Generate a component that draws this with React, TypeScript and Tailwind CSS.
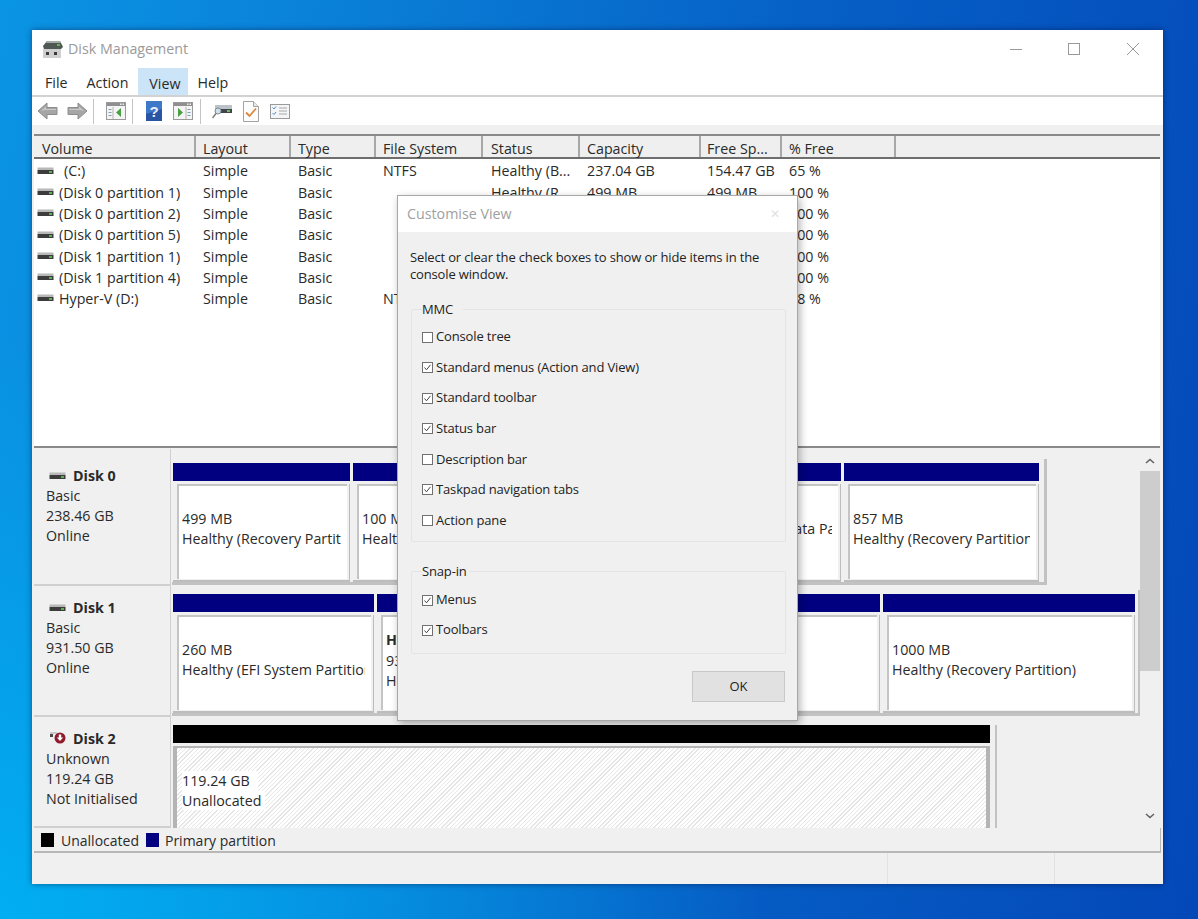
const widths = [
  "w-[162px] pl-2",
  "w-[95px] pl-[7px]",
  "w-[85px] pl-[7px]",
  "w-[107px] pl-[7px]",
  "w-[97px] pl-2",
  "w-[121px] pl-[7px]",
  "w-[81px] pl-[6px]",
  "w-[114px] pl-[7px]",
];

const headers = ["Volume", "Layout", "Type", "File System", "Status", "Capacity", "Free Sp...", "% Free"];

const rows = [
  ["(C:)", "Simple", "Basic", "NTFS", "Healthy (B...", "237.04 GB", "154.47 GB", "65 %"],
  ["(Disk 0 partition 1)", "Simple", "Basic", "", "Healthy (R...", "499 MB", "499 MB", "100 %"],
  ["(Disk 0 partition 2)", "Simple", "Basic", "", "Healthy (E...", "100 MB", "100 MB", "100 %"],
  ["(Disk 0 partition 5)", "Simple", "Basic", "", "Healthy (R...", "857 MB", "857 MB", "100 %"],
  ["(Disk 1 partition 1)", "Simple", "Basic", "", "Healthy (E...", "260 MB", "260 MB", "100 %"],
  ["(Disk 1 partition 4)", "Simple", "Basic", "", "Healthy (R...", "1000 MB", "1000 MB", "100 %"],
  ["Hyper-V (D:)", "Simple", "Basic", "NTFS", "Healthy (B...", "930.26 GB", "446.52 GB", "48 %"],
];

function DriveIcon() {
  return (
    <svg width="17" height="9" viewBox="0 0 17 9" className="shrink-0">
      <rect x="0.5" y="0.5" width="16" height="2.5" fill="#b8b8b8" />
      <rect x="0.5" y="3" width="16" height="4" fill="#3c3c3c" />
      <rect x="12" y="4" width="3" height="2" fill="#59b34c" />
    </svg>
  );
}

function BadDiskIcon() {
  return (
    <svg width="18" height="16" viewBox="0 0 18 16" className="shrink-0">
      <rect x="1" y="1" width="7" height="2" fill="#c9c9c9" />
      <rect x="1" y="3" width="3" height="3" fill="#4a4a4a" />
      <circle cx="11" cy="7" r="5.5" fill="#8e1b2c" />
      <path d="M9.8 3.5h2.4v3h2L11 10 7.8 6.500h2z" fill="#fff" />
    </svg>
  );
}

function ArrowIcon({ flip }: { flip?: boolean }) {
  return (
    <svg width="21" height="20" viewBox="0 0 21 20" className={flip ? "-scale-x-100" : ""}>
      <path d="M1 10 10 2v4.500h10v7H10V18z" fill="#a6a6a6" stroke="#8c8c8c" strokeWidth="1" />
      <path d="M4 10 9 5.500V8h10v1H8z" fill="#c8c8c8" />
    </svg>
  );
}

function PaneIcon({ arrowLeft }: { arrowLeft?: boolean }) {
  return (
    <svg width="20" height="18" viewBox="0 0 20 18">
      <rect x="0.5" y="0.5" width="19" height="17" fill="#f4f4f4" stroke="#9a9a9a" />
      <rect x="1" y="1" width="18" height="3" fill="#8f8f8f" />
      <rect x="14" y="1.500" width="1.500" height="1.500" fill="#eee" />
      <rect x="16.500" y="1.500" width="1.500" height="1.500" fill="#eee" />
      {arrowLeft ? (
        <g>
          <path d="M7 5v12" stroke="#b4b4b4" />
          <path d="M2.500 7.500h3M2.500 10.500h3M2.500 13.500h3" stroke="#7f9fb5" strokeWidth="1.200" />
          <path d="M15 6v9l-5-4.500z" fill="#4a9f45" />
        </g>
      ) : (
        <g>
          <path d="M13 5v12" stroke="#b4b4b4" />
          <path d="M14.500 7.500h3M14.500 10.500h3M14.500 13.500h3" stroke="#7f9fb5" strokeWidth="1.200" />
          <path d="M5 6v9l5-4.500z" fill="#4a9f45" />
        </g>
      )}
    </svg>
  );
}

function HelpIcon() {
  return (
    <svg width="16" height="20" viewBox="0 0 16 20">
      <rect width="16" height="20" fill="#2a55a5" />
      <path d="M0 0h16v8L0 13z" fill="#3f78c8" />
      <text x="8" y="15.500" textAnchor="middle" fontSize="15" fontWeight="700" fontFamily="Liberation Sans, sans-serif" fill="#e8eef8">?</text>
    </svg>
  );
}

function FindDiskIcon() {
  return (
    <svg width="21" height="20" viewBox="0 0 21 20">
      <rect x="3" y="4" width="17" height="4" fill="#b9c3c9" />
      <rect x="3" y="8" width="17" height="4" fill="#3f4548" />
      <rect x="15" y="9" width="3" height="2" fill="#6cbf5a" />
      <circle cx="6" cy="10" r="3" fill="#cfe0ea" stroke="#7d8a90" />
      <path d="M4 12.500 0.500 17" stroke="#7d7d7d" strokeWidth="1.500" />
    </svg>
  );
}

function CheckDocIcon() {
  return (
    <svg width="16" height="21" viewBox="0 0 16 21">
      <path d="M0.500 0.500h10l5 5v15H0.500z" fill="#fdfdfd" stroke="#a3a3a3" />
      <path d="M10.500 0.500v5h5" fill="#e9e9e9" stroke="#a3a3a3" />
      <path d="M3 11.500 6.500 15 13 7.500" fill="none" stroke="#d9883d" strokeWidth="1.800" />
    </svg>
  );
}

function ListIcon() {
  return (
    <svg width="20" height="15" viewBox="0 0 20 15">
      <rect x="0.500" y="0.500" width="19" height="14" fill="#f3f5f7" stroke="#9a9a9a" />
      <path d="M2.500 3.500 4 5l2-2.500M2.500 9 4 10.500l2-2.500" fill="none" stroke="#4f8fc9" strokeWidth="1" />
      <path d="M9 4h8M9 7h8M9 10h8" stroke="#a8a8a8" />
    </svg>
  );
}

function TitleIcon() {
  return (
    <svg width="21" height="19" viewBox="0 0 21 19">
      <path d="M5 1h13l3 6-2 2H2L1 6z" fill="#4f5853" />
      <path d="M5 1h13l1 2H4z" fill="#a3aca7" />
      <rect x="15" y="4" width="3" height="2" fill="#62b552" />
      <rect x="1" y="9" width="18" height="9" fill="#cfcfcf" />
      <rect x="4" y="12" width="3" height="3" fill="#3a3a3a" />
      <rect x="12" y="12" width="3" height="3" fill="#3a3a3a" />
    </svg>
  );
}

function Sep() {
  return <div className="h-[25px] w-px bg-[#c4c4c4]" />;
}

function Partition({
  width,
  bar = "bg-[#000080]",
  size,
  status,
  boldName,
}: {
  width: string;
  bar?: string;
  size?: string;
  status: string;
  boldName?: string;
}) {
  return (
    <div className={`${width} flex h-full shrink-0 flex-col border-r-[3px] border-[#f0f0f0]`}>
      <div className={`h-[18px] ${bar}`} />
      <div className="mt-[3px] flex-1 border-r border-b-2 border-[#bdbdbd] pr-[2px] pb-[1px] pl-1">
        <div className="h-full border-t-2 border-l-2 border-[#c4c4c4] bg-white pr-[6px] pl-[3px]">
          <div className="flex h-full flex-col justify-center overflow-hidden pb-[7px] whitespace-nowrap">
            {boldName && <div className="font-bold">{boldName}</div>}
            {size && <div className="leading-[20px]">{size}</div>}
            <div className="leading-[20px]">{status}</div>
          </div>
        </div>
      </div>
    </div>
  );
}

function DiskLabel({
  name,
  lines,
  height,
  top,
  bad,
}: {
  name: string;
  lines: string[];
  height: string;
  top: string;
  bad?: boolean;
}) {
  return (
    <div className={`${height} ${top} w-[137px] shrink-0 border-r border-b-2 border-[#d0d0d0] bg-[#f0f0f0] pl-[12px]`}>
      <div className="flex h-[20px] items-center gap-[7px] pl-[3px] font-bold">
        {bad ? <BadDiskIcon /> : <DriveIcon />}
        <span className={bad ? "-ml-[1px]" : ""}>{name}</span>
      </div>
      {lines.map((l) => (
        <div key={l} className="h-[20px] leading-[20px]">
          {l}
        </div>
      ))}
    </div>
  );
}

function Check({ label, checked }: { label: string; checked?: boolean }) {
  return (
    <div className="flex h-[20px] items-center gap-[3px] text-[#222]">
      <div className="flex size-[11px] items-center justify-center border border-[#707070] bg-white">
        {checked && (
          <svg width="9" height="9" viewBox="0 0 9 9">
            <path d="M1.500 4.500 3.500 6.800 7.500 1.800" fill="none" stroke="#444" strokeWidth="1" />
          </svg>
        )}
      </div>
      <span>{label}</span>
    </div>
  );
}

function Dialog() {
  return (
    <div className="absolute top-[195px] left-[397px] h-[526px] w-[401px] border border-[#a8a8a8] bg-[#f0f0f0] text-[13px] tracking-[-0.15px] shadow-[2px_3px_8px_rgba(0,0,0,0.3)]">
      <div className="flex h-[36px] items-center justify-between bg-white pr-[17px] pl-[9px] text-[14.250px] tracking-normal text-[#a0a0a0]">
        <span>Customise View</span>
        <span className="text-[12px] text-[#e2e2e2]">✕</span>
      </div>
      <div className="pt-[17px] pl-[12px] leading-[17px] text-[#222]">
        Select or clear the check boxes to show or hide items in the
        <br />
        console window.
      </div>
      <div className="mt-[16px] mr-[11px] ml-[13px]">
        <fieldset className="h-[243px] rounded-[2px] border border-[#e4e4e4] px-[10px]">
          <legend className="pr-[10px] leading-[20px] text-[#222]">MMC</legend>
          <div className="mt-[8px] flex flex-col gap-[10.600px]">
            <Check label="Console tree" />
            <Check label="Standard menus (Action and View)" checked />
            <Check label="Standard toolbar" checked />
            <Check label="Status bar" checked />
            <Check label="Description bar" />
            <Check label="Taskpad navigation tabs" checked />
            <Check label="Action pane" />
          </div>
        </fieldset>
        <fieldset className="mt-[19px] h-[93px] rounded-[2px] border border-[#e4e4e4] px-[10px]">
          <legend className="pr-[2px] leading-[20px] text-[#222]">Snap-in</legend>
          <div className="mt-[9px] flex flex-col gap-[10px]">
            <Check label="Menus" checked />
            <Check label="Toolbars" checked />
          </div>
        </fieldset>
        <div className="mt-[17px] mr-[1px] flex justify-end">
          <button className="h-[31px] w-[93px] border border-[#c8c8c8] bg-[#e1e1e1] text-[#222]">OK</button>
        </div>
      </div>
    </div>
  );
}

export default function App() {
  return (
    <div className="relative h-[919px] w-[1198px] overflow-hidden bg-[radial-gradient(ellipse_at_0%_100%,rgba(0,180,245,0.85)_0%,rgba(0,180,245,0)_45%),linear-gradient(100deg,#0a94e4_0%,#0a80d8_25%,#0660c6_60%,#0448b8_100%)] pt-[30px] pl-[32px] font-['Open_Sans',sans-serif] text-[14.250px] text-[#2a2a2a]">
      <div className="flex h-[854px] w-[1131px] flex-col bg-[#f0f0f0] shadow-[0_0_6px_rgba(0,0,40,0.45)]">
        {/* title bar */}
        <div className="flex h-[38px] items-center bg-white pl-[10px]">
          <TitleIcon />
          <span className="ml-[5px] text-[#9a9a9a]">Disk Management</span>
          <div className="ml-auto flex items-center gap-[46px] pr-[24px]">
            <div className="h-px w-[12px] bg-[#9a9a9a]" />
            <div className="size-[12px] border border-[#9a9a9a]" />
            <svg width="12" height="12" viewBox="0 0 12 12" className="ml-[1px]">
              <path d="M0 0 12 12M12 0 0 12" stroke="#9a9a9a" />
            </svg>
          </div>
        </div>
        {/* menu */}
        <div className="flex h-[29px] items-stretch border-b-2 border-[#d2d2d2] bg-white pl-[13px]">
          <div className="flex items-center pt-[2px] pr-[19px]">File</div>
          <div className="flex items-center pt-[2px] pr-[10px]">Action</div>
          <div className="flex w-[50px] items-center justify-center bg-[#cce4f7] pt-[4px] pl-[3px]">View</div>
          <div className="flex items-center pt-[2px] pl-[9px]">Help</div>
        </div>
        {/* toolbar */}
        <div className="flex h-[28px] items-center bg-white pl-[5px]">
          <ArrowIcon />
          <div className="w-[9px]" />
          <ArrowIcon flip />
          <div className="w-[5px]" />
          <Sep />
          <div className="w-[12px]" />
          <PaneIcon arrowLeft />
          <div className="w-[6px]" />
          <Sep />
          <div className="w-[13px]" />
          <HelpIcon />
          <div className="w-[11px]" />
          <PaneIcon />
          <div className="w-[7px]" />
          <Sep />
          <div className="w-[11px]" />
          <FindDiskIcon />
          <div className="w-[10px]" />
          <CheckDocIcon />
          <div className="w-[11px]" />
          <ListIcon />
        </div>
        <div className="h-[9px] bg-[#f0f0f0]" />

        {/* volume list */}
        <div className="ml-[2px] h-[314px] w-[1126px] shrink-0 overflow-hidden border-t-2 border-b-2 border-[#8a8a8a] bg-white">
          <div className="flex h-[23px] border-b-2 border-[#6e6e6e] bg-[#efefef]">
            {headers.map((h, i) => (
              <div key={h} className={`${widths[i]} flex items-end border-r-2 border-[#a8a8a8] leading-[16px] whitespace-nowrap`}>
                {h}
              </div>
            ))}
          </div>
          <div className="pt-[1.500px]">
            {rows.map((r) => (
              <div key={r[0]} className="flex h-[21.300px] items-center whitespace-nowrap">
                {r.map((c, i) =>
                  i === 0 ? (
                    <div key={i} className="flex w-[162px] items-center pl-[3px]">
                      <DriveIcon />
                      <span className={c === "(C:)" ? "ml-[10px]" : "ml-[5px]"}>{c}</span>
                    </div>
                  ) : (
                    <div key={i} className={widths[i]}>
                      {c}
                    </div>
                  ),
                )}
              </div>
            ))}
          </div>
        </div>

        {/* disk pane */}
        <div className="mt-[1px] flex h-[379px] shrink-0 overflow-hidden pl-[2px]">
          <div className="w-[1106px] overflow-hidden">
            {/* disk 0 */}
            <div className="flex">
              <DiskLabel name="Disk 0" lines={["Basic", "238.46 GB", "Online"]} height="h-[137px]" top="pt-[17px]" />
              <div className="mt-[10px] ml-[1px] h-[126px] w-[875px] shrink-0 border-r-[3px] border-b-[3px] border-[#c2c2c2] pt-[4px] pl-[1px]">
                <div className="flex h-full">
                  <Partition width="w-[180px]" size="499 MB" status="Healthy (Recovery Partition)" />
                  <Partition width="w-[325px]" size="100 MB" status="Healthy (EFI System Partition)" />
                  <Partition width="w-[166px]" status="Healthy (Basic Data Partition)" />
                  <Partition width="w-[198px]" size="857 MB" status="Healthy (Recovery Partition)" />
                </div>
              </div>
            </div>
            {/* disk 1 */}
            <div className="flex">
              <DiskLabel name="Disk 1" lines={["Basic", "931.50 GB", "Online"]} height="h-[131px]" top="pt-[12px]" />
              <div className="mt-[4px] ml-[1px] h-[126px] w-[969px] shrink-0 border-r-[3px] border-b-[3px] border-[#c2c2c2] pt-[4px] pl-[1px]">
                <div className="flex h-full">
                  <Partition width="w-[204px]" size="260 MB" status="Healthy (EFI System Partition)" />
                  <Partition width="w-[506px]" boldName="Hyper-V (D:)" size="931.50 GB NTFS" status="Healthy (Basic Data Partition)" />
                  <Partition width="w-[255px]" size="1000 MB" status="Healthy (Recovery Partition)" />
                </div>
              </div>
            </div>
            {/* disk 2 */}
            <div className="flex">
              <DiskLabel name="Disk 2" lines={["Unknown", "119.24 GB", "Not Initialised"]} height="h-[111px]" top="pt-[12px]" bad />
              <div className="mt-[8px] ml-[1px] w-[825px] shrink-0 border-r-2 border-[#c2c2c2] pl-[1px]">
                <div className="w-[817px]">
                  <div className="h-[18px] bg-black" />
                  <div className="mt-[3px] h-[85px] border-t-2 border-r-4 border-l-4 border-[#b4b4b4] bg-[repeating-linear-gradient(135deg,#e6e6e6_0,#e6e6e6_1px,#ffffff_1px,#ffffff_3px)] pt-[23px] pl-[5px]">
                    <div className="w-fit bg-white pr-2 leading-[20px]">119.24 GB</div>
                    <div className="w-fit bg-white pr-1 leading-[19px]">Unallocated</div>
                  </div>
                </div>
              </div>
            </div>
          </div>
          {/* scrollbar */}
          <div className="flex w-[20px] shrink-0 flex-col items-center bg-[#f0f0f0]">
            <svg width="10" height="6" viewBox="0 0 10 6" className="mt-[9px]">
              <path d="M1 5 5 1.500 9 5" fill="none" stroke="#606060" strokeWidth="1.500" />
            </svg>
            <div className="mt-[7px] h-[200px] w-full bg-[#cdcdcd]" />
            <svg width="10" height="6" viewBox="0 0 10 6" className="mt-[142px]">
              <path d="M1 1 5 4.500 9 1" fill="none" stroke="#606060" strokeWidth="1.500" />
            </svg>
          </div>
        </div>

        {/* legend */}
        <div className="ml-[2px] flex h-[25px] w-[1127px] shrink-0 items-center border-r border-b-2 border-[#b8b8b8] pt-[1px] pl-[7px] text-[14px]">
          <div className="h-[14px] w-[13px] bg-black" />
          <span className="ml-[7px]">Unallocated</span>
          <div className="ml-[7px] h-[14px] w-[13px] bg-[#000080]" />
          <span className="ml-[6px]">Primary partition</span>
        </div>

        {/* status bar */}
        <div className="flex flex-1 justify-end">
          <div className="w-[167px] border-l border-[#e2e2e2]" />
          <div className="w-[109px] border-l border-[#e2e2e2]" />
        </div>
      </div>
      <Dialog />
    </div>
  );
}
